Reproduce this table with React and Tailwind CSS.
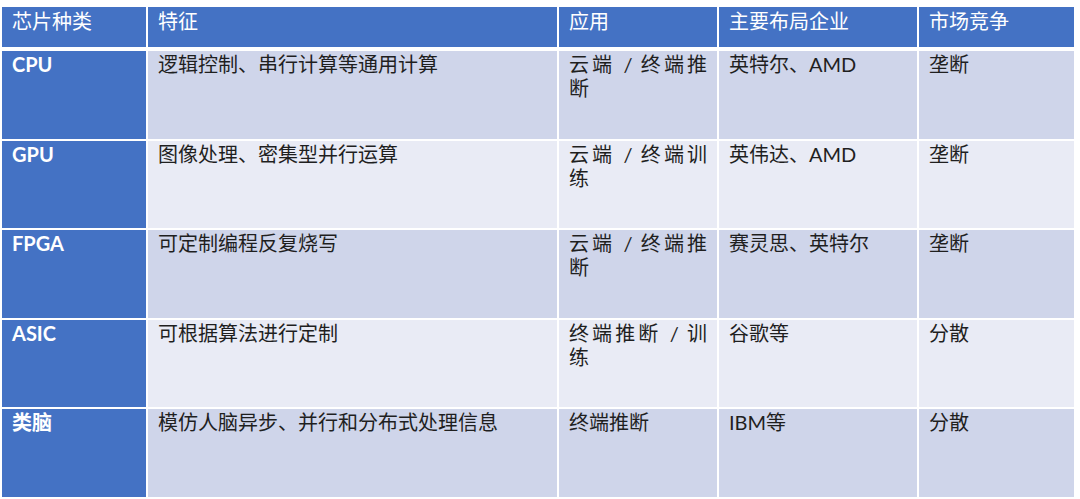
const HEAD = ["芯片种类", "特征", "应用", "主要布局企业", "市场竞争"]

const ROWS = [
  { chip: "CPU", feature: "逻辑控制、串行计算等通用计算", app: "云端 / 终端推断", firms: "英特尔、AMD", market: "垄断" },
  { chip: "GPU", feature: "图像处理、密集型并行运算", app: "云端 / 终端训练", firms: "英伟达、AMD", market: "垄断" },
  { chip: "FPGA", feature: "可定制编程反复烧写", app: "云端 / 终端推断", firms: "赛灵思、英特尔", market: "垄断" },
  { chip: "ASIC", feature: "可根据算法进行定制", app: "终端推断 / 训练", firms: "谷歌等", market: "分散" },
  { chip: "类脑", feature: "模仿人脑异步、并行和分布式处理信息", app: "终端推断", firms: "IBM等", market: "分散" },
]

const COLS = "grid-cols-[144px_409px_158px_198px_155px]"

export default function App() {
  return (
    <div
      className="h-[499px] w-[1080px] overflow-hidden bg-white pl-[2px] pt-[7px] text-[20px] leading-[24px] text-[#1f1f1f]"
      style={{ fontFamily: '"Lato", "Noto Sans CJK SC", sans-serif' }}
    >
      <div className={`grid ${COLS} h-[40px] gap-x-[2px]`}>
        {HEAD.map((h) => (
          <div key={h} className="bg-[#4472c4] px-[10px] pt-[2px] text-white">
            {h}
          </div>
        ))}
      </div>
      <div className={`mt-[4px] grid ${COLS} grid-rows-[repeat(5,87.6px)] gap-[2px]`}>
        {ROWS.map((r, i) => {
          const bg = i % 2 === 0 ? "bg-[#cfd5ea]" : "bg-[#e9ebf5]"
          return [
            <div key={r.chip} className="bg-[#4472c4] px-[10px] pt-[1px] font-bold text-white">
              {r.chip}
            </div>,
            <div key={r.chip + "f"} className={`${bg} px-[10px] pt-[1px]`}>
              {r.feature}
            </div>,
            <div key={r.chip + "a"} className={`${bg} px-[10px] pt-[1px] text-justify`}>
              {r.app}
            </div>,
            <div key={r.chip + "c"} className={`${bg} px-[10px] pt-[1px]`}>
              {r.firms}
            </div>,
            <div key={r.chip + "m"} className={`${bg} px-[10px] pt-[1px]`}>
              {r.market}
            </div>,
          ]
        })}
      </div>
    </div>
  )
}
